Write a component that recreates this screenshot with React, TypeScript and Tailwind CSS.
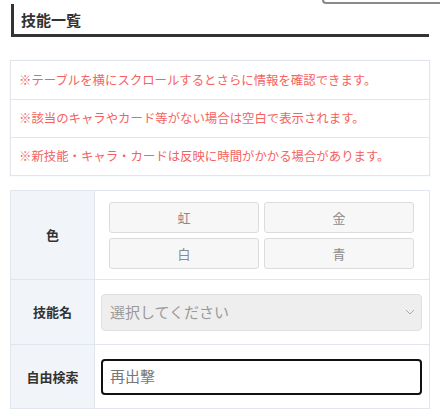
const font = { fontFamily: '"Noto Sans CJK JP", "Noto Sans", sans-serif' };

const notices = [
  '※テーブルを横にスクロールするとさらに情報を確認できます。',
  '※該当のキャラやカード等がない場合は空白で表示されます。',
  '※新技能・キャラ・カードは反映に時間がかかる場合があります。',
];

const colors = ['虹', '金', '白', '青'];

export default function App() {
  return (
    <div className="w-[440px] h-[414px] overflow-hidden bg-white" style={font}>
      {/* bottom edge of a box that sits above the view */}
      <div className="flex justify-end">
        <div className="w-[118px] h-[4px] border-b-2 border-l-2 border-[#8a8a8a] rounded-bl-[8px]" />
      </div>

      <div className="pl-[11px] pr-[11px]">
        <h2 className="h-[33px] border-l-[3px] border-b-[3px] border-[#333] pl-[7px] flex items-center text-[15px] font-bold text-[#333] leading-none">
          技能一覧
        </h2>
      </div>

      <div className="mx-[10px] mt-[23px] border border-[#e1e5ec] shadow-[0_0_1px_#e1e5ec]">
        {notices.map((n, i) => (
          <div
            key={i}
            className={`h-[38px] flex items-center pl-[8px] text-[12.4px] text-[#f56262] ${i > 0 ? 'border-t border-[#e1e5ec]' : ''}`}
          >
            {n}
          </div>
        ))}
      </div>

      <div className="mx-[10px] mt-[14px] border border-[#e1e5ec]">
        <div className="flex h-[88px]">
          <div className="w-[84px] shrink-0 bg-[#f1f4f8] border-r border-[#e1e5ec] flex items-center justify-center text-[13px] font-bold text-[#333]">
            色
          </div>
          <div className="flex-1 pl-[14px] pr-[15px] pt-[11px]">
            <div className="grid grid-cols-2 gap-[5px]">
              {colors.map((c) => (
                <button
                  key={c}
                  className="h-[31px] bg-[#f7f7f7] border border-[#dcdcdc] rounded-[3px] text-[13px] text-[#8a8a8a]"
                >
                  {c}
                </button>
              ))}
            </div>
          </div>
        </div>

        <div className="flex h-[65px] border-t border-[#e1e5ec]">
          <div className="w-[84px] shrink-0 bg-[#f1f4f8] border-r border-[#e1e5ec] flex items-center justify-center text-[13px] font-bold text-[#333]">
            技能名
          </div>
          <div className="flex-1 flex items-center pl-[6px] pr-[7px]">
            <div className="w-full h-[37px] bg-[#eeeeee] border border-[#e0e0e0] rounded-[4px] flex items-center justify-between pl-[8px] pr-[6px]">
              <span className="text-[15px] text-[#9a9a9a]">選択してください</span>
              <svg width="10" height="6" viewBox="0 0 10 6" fill="none">
                <path d="M1 1l4 4 4-4" stroke="#aaa" strokeWidth="1" />
              </svg>
            </div>
          </div>
        </div>

        <div className="flex h-[64px] border-t border-[#e1e5ec]">
          <div className="w-[84px] shrink-0 bg-[#f1f4f8] border-r border-[#e1e5ec] flex items-center justify-center text-[13px] font-bold text-[#333]">
            自由検索
          </div>
          <div className="flex-1 flex items-center pl-[6px] pr-[7px]">
            <div className="w-full h-[36px] border-2 border-[#111] rounded-[4px] flex items-center pl-[7px]">
              <span className="text-[15px] text-[#777]">再出撃</span>
            </div>
          </div>
        </div>
      </div>
    </div>
  );
}
